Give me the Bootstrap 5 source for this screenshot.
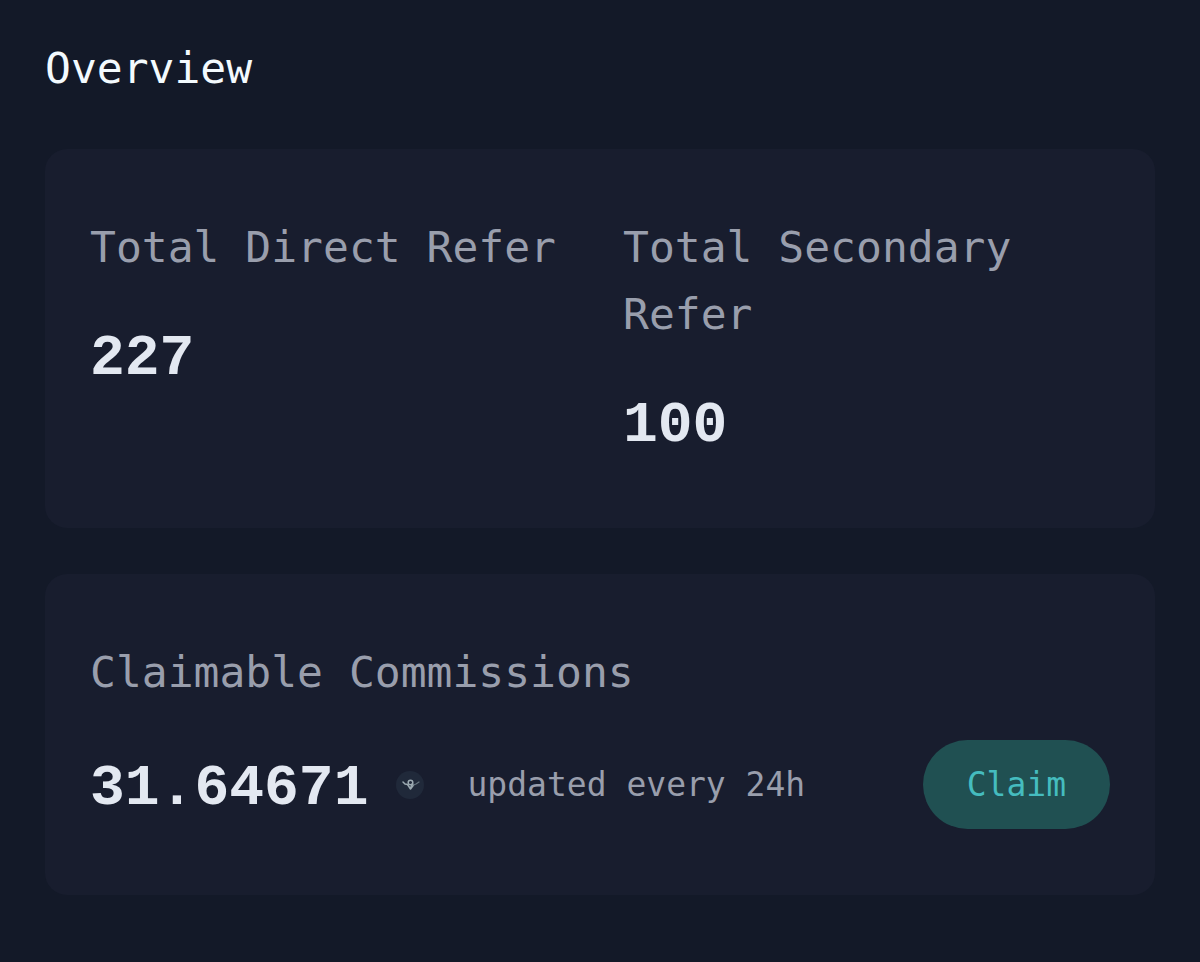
<!DOCTYPE html>
<html lang="en">
<head>
<meta charset="utf-8">
<meta name="viewport" content="width=device-width, initial-scale=1">
<title>Overview</title>
<link href="https://cdn.jsdelivr.net/npm/bootstrap@5.3.0/dist/css/bootstrap.min.css" rel="stylesheet">
<style>
body { background: #131928; color: #999eac; font-family: "DejaVu Sans Mono", "Liberation Mono", monospace; font-size: 43px; line-height: 67px; }
.page { padding: 35px 45px 66px; }
.page-title { color: #f3fafe; font-size: 43px; line-height: 67px; margin-bottom: 47px; }
.panel { background: #181d2e; border-radius: 22px; padding: 65px 45px 66px; }
.panels { gap: 46px; }
.stats { --bs-gutter-x: 46px; }
.label-text { font-size: 43px; line-height: 67px; margin-bottom: 34px; font-weight: 400; }
.figure-text { color: #e3e8f1; font-family: "Liberation Mono", monospace; font-size: 58px; line-height: 72px; padding-top: 8px; font-weight: 700; }
.coin { width: 28px; height: 28px; margin-left: 28px; flex: none; }
.note { font-size: 33px; line-height: 50px; margin-left: 43px; }
.btn-claim { --bs-btn-color: #45bcbf; --bs-btn-bg: #205052; --bs-btn-hover-color: #62d3d6; --bs-btn-hover-bg: #25605f; --bs-btn-active-color: #62d3d6; --bs-btn-active-bg: #1b4648; --bs-btn-border-width: 0; --bs-btn-padding-x: 44px; --bs-btn-padding-y: 20px; --bs-btn-font-size: 33px; --bs-btn-line-height: 49px; }
</style>
</head>
<body>
<main class="page">
  <h1 class="page-title fw-normal">Overview</h1>
  <div class="panels d-flex flex-column">
    <section class="panel">
      <div class="row stats">
        <div class="col-6">
          <h2 class="label-text">Total Direct Refer</h2>
          <div class="figure-text">227</div>
        </div>
        <div class="col-6">
          <h2 class="label-text">Total Secondary Refer</h2>
          <div class="figure-text">100</div>
        </div>
      </div>
    </section>
    <section class="panel">
      <h2 class="label-text">Claimable Commissions</h2>
      <div class="d-flex align-items-center">
        <span class="figure-text">31.64671</span>
        <svg class="coin" viewBox="0 0 28 28" aria-hidden="true">
          <circle cx="14" cy="14" r="14" fill="#20293a"/>
          <g fill="none" stroke="#9caab2" stroke-linecap="round" stroke-linejoin="round">
            <path d="M7 11 9 13 11.500 13.500 14.500 18 17.500 14" stroke-width="1.500"/>
            <path d="M17.500 14 20 13 23 11" stroke="#66747f" stroke-width="1.200"/>
            <circle cx="14.500" cy="11.500" r="2.300" stroke-width="1.500"/>
            <path d="M16.500 12.500 14.500 17" stroke-width="1.500"/>
          </g>
        </svg>
        <span class="note">updated every 24h</span>
        <button type="button" class="btn btn-claim rounded-pill ms-auto">Claim</button>
      </div>
    </section>
  </div>
</main>
<script src="https://cdn.jsdelivr.net/npm/bootstrap@5.3.0/dist/js/bootstrap.bundle.min.js"></script>
</body>
</html>
